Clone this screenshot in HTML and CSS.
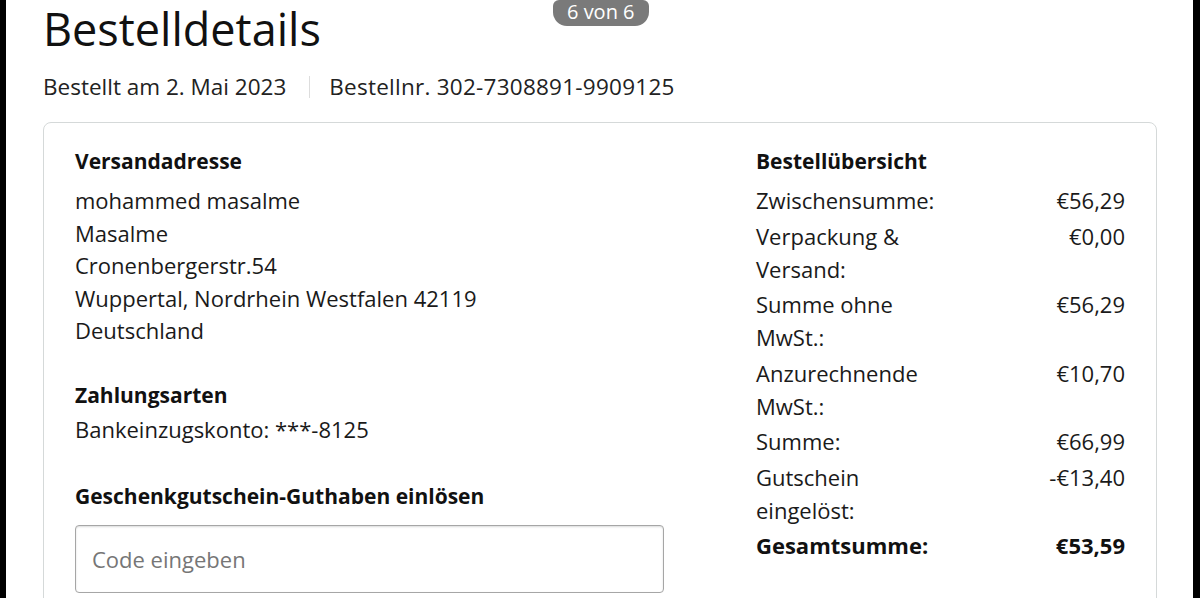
FILE: index.html
```html
<!DOCTYPE html>
<html lang="de">
<head>
    <meta charset="UTF-8">
    <meta name="viewport" content="width=device-width, initial-scale=1.0">
    <title>Bestelldetails</title>
    <link rel="stylesheet" href="styles.css">
</head>
<body>
    <div class="page">
        <div class="badge">6 von 6</div>
        <h1>Bestelldetails</h1>
        <div class="meta">
            <span>Bestellt am 2. Mai 2023</span>
            <span class="sep"></span>
            <span class="order-no">Bestellnr. 302-7308891-9909125</span>
        </div>

        <div class="card">
            <div class="left">
                <h2 class="first">Versandadresse</h2>
                <div class="address">
                    <div>mohammed masalme</div>
                    <div>Masalme</div>
                    <div>Cronenbergerstr.54</div>
                    <div>Wuppertal, Nordrhein Westfalen 42119</div>
                    <div>Deutschland</div>
                </div>

                <h2 class="pay">Zahlungsarten</h2>
                <div>Bankeinzugskonto: ***-8125</div>

                <h2 class="gift">Geschenkgutschein-Guthaben einlösen</h2>
                <input type="text" class="code-input" placeholder="Code eingeben">
            </div>

            <div class="right">
                <h2 class="first">Bestellübersicht</h2>
                <div class="row"><span class="label">Zwischensumme:</span><span class="value">€56,29</span></div>
                <div class="row"><span class="label">Verpackung &amp; Versand:</span><span class="value">€0,00</span></div>
                <div class="row"><span class="label">Summe ohne MwSt.:</span><span class="value">€56,29</span></div>
                <div class="row"><span class="label">Anzurechnende MwSt.:</span><span class="value">€10,70</span></div>
                <div class="row"><span class="label">Summe:</span><span class="value">€66,99</span></div>
                <div class="row"><span class="label">Gutschein eingelöst:</span><span class="value">-€13,40</span></div>
                <div class="row total"><span class="label">Gesamtsumme:</span><span class="value">€53,59</span></div>
            </div>
        </div>
    </div>
</body>
</html>
```

FILE: styles.css
```css
body {
    margin: 0;
    background-color: #000;
    font-family: "Open Sans", "Noto Sans", sans-serif;
    color: #1a1a1a;
    overflow: hidden;
}
.page {
    position: relative;
    margin: 0 7px 0 6px;
    padding: 0 36px 0 37px;
    min-height: 598px;
    background: #fff;
}
.badge {
    position: absolute;
    left: 547px;
    top: 0;
    padding: 1px 14px 3px;
    background-color: #7a7a7a;
    color: #fff;
    font-size: 20px;
    line-height: 22px;
    border-radius: 6px 6px 14px 14px;
}
h1 {
    margin: 0;
    padding-top: 1px;
    font-size: 45px;
    font-weight: 400;
    line-height: 56px;
    color: #111;
}
.meta {
    display: flex;
    align-items: center;
    margin-top: 15px;
    font-size: 22.5px;
    line-height: 30px;
    color: #222;
}
.order-no {
    letter-spacing: 0.25px;
}
.sep {
    width: 1px;
    height: 22px;
    margin: 0 19px 0 23px;
    background-color: #ddd;
}
.card {
    display: grid;
    grid-template-columns: 589px 1fr;
    column-gap: 92px;
    margin-top: 20px;
    padding: 22px 31px 40px 31px;
    border: 1px solid #d5d9d9;
    border-radius: 8px;
    font-size: 22px;
    line-height: 32.5px;
}
h2 {
    margin: 0 0 1px;
    font-size: 21px;
    font-weight: 700;
    line-height: 33px;
    color: #111;
}
h2.first {
    margin-bottom: 6px;
}
h2.pay {
    margin-top: 32px;
}
h2.gift {
    margin-top: 35px;
}
.code-input {
    display: block;
    box-sizing: border-box;
    width: 589px;
    height: 68px;
    margin-top: 12px;
    padding: 0 16px;
    border: 1px solid #a6a6a6;
    border-radius: 4px;
    font-family: inherit;
    font-size: 22px;
    box-shadow: 0 1px 2px rgba(15,17,17,0.15) inset;
}
.code-input::placeholder {
    color: #767676;
}
.row {
    display: flex;
    justify-content: space-between;
    margin-bottom: 2.5px;
    line-height: 33px;
}
.label {
    width: 190px;
}
.total {
    font-weight: 700;
    color: #111;
}
```
